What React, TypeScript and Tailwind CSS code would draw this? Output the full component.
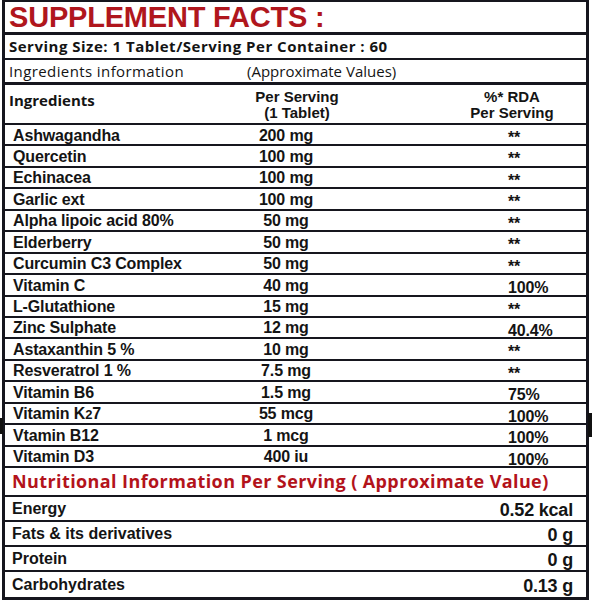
import React from 'react';

type Ingredient = {
  name: React.ReactNode;
  key: string;
  amount: string;
  rda: string;
};

const ingredients: Ingredient[] = [
  { key: 'ash', name: 'Ashwagandha', amount: '200 mg', rda: '**' },
  { key: 'que', name: 'Quercetin', amount: '100 mg', rda: '**' },
  { key: 'ech', name: 'Echinacea', amount: '100 mg', rda: '**' },
  { key: 'gar', name: 'Garlic ext', amount: '100 mg', rda: '**' },
  { key: 'ala', name: 'Alpha lipoic acid 80%', amount: '50 mg', rda: '**' },
  { key: 'eld', name: 'Elderberry', amount: '50 mg', rda: '**' },
  { key: 'cur', name: 'Curcumin C3 Complex', amount: '50 mg', rda: '**' },
  { key: 'vc', name: 'Vitamin C', amount: '40 mg', rda: '100%' },
  { key: 'glu', name: 'L-Glutathione', amount: '15 mg', rda: '**' },
  { key: 'zin', name: 'Zinc Sulphate', amount: '12 mg', rda: '40.4%' },
  { key: 'ast', name: 'Astaxanthin 5 %', amount: '10 mg', rda: '**' },
  { key: 'res', name: 'Resveratrol 1 %', amount: '7.5 mg', rda: '**' },
  { key: 'b6', name: 'Vitamin B6', amount: '1.5 mg', rda: '75%' },
  {
    key: 'k27',
    name: (
      <>
        Vitamin K<span className="text-[13px]">2</span>7
      </>
    ),
    amount: '55 mcg',
    rda: '100%',
  },
  { key: 'b12', name: 'Vtamin B12', amount: '1 mcg', rda: '100%' },
  { key: 'd3', name: 'Vitamin D3', amount: '400 iu', rda: '100%' },
];

const nutrition = [
  { label: 'Energy', value: '0.52 kcal' },
  { label: 'Fats & its derivatives', value: '0 g' },
  { label: 'Protein', value: '0 g' },
  { label: 'Carbohydrates', value: '0.13 g' },
];

const App: React.FC = () => {
  return (
    <div className="relative w-[592px] h-[600px] bg-white overflow-hidden">
      {/* scan marks on the edges */}
      <div className="absolute left-0 top-[418px] w-[3px] h-[16px] bg-[#111]" />
      <div className="absolute right-0 top-[413px] w-[4px] h-[24px] bg-[#111]" />

      <div className="ml-[2px] w-[587px] h-[600px] flex flex-col border-x-[3px] border-t-2 border-b-[3px] border-[#16161e] text-[#141414] font-['Liberation_Sans',Arial,sans-serif]">
        {/* Title */}
        <div className="h-[33px] shrink-0 flex items-center pl-1 border-b-[3px] border-[#16161e]">
          <h1 className="text-[29px] font-bold leading-none text-[#b0161d] tracking-[-0.2px]">
            SUPPLEMENT FACTS :
          </h1>
        </div>

        {/* Serving size */}
        <div className="h-[25px] shrink-0 flex items-center pl-1 border-b-2 border-[#16161e] font-['Open_Sans',sans-serif] font-bold text-[15px] tracking-[0.5px]">
          Serving Size: 1 Tablet/Serving Per Container : 60
        </div>

        {/* Ingredients information */}
        <div className="h-[25px] shrink-0 flex items-center pl-1 border-b-[3px] border-[#16161e] font-['Open_Sans',sans-serif] text-[15px]">
          <span className="w-[238px] tracking-[0.4px]">Ingredients information</span>
          <span>(Approximate Values)</span>
        </div>

        {/* Column headers */}
        <div className="h-[40px] shrink-0 grid grid-cols-[225px_112px_1fr] border-b-2 border-[#16161e] text-[15px] font-bold leading-[16px]">
          <div className="pl-1 pt-[7px] font-['Open_Sans',sans-serif]">Ingredients</div>
          <div className="pt-[4px] pl-[22px] text-center">
            Per Serving
            <br />
            (1 Tablet)
          </div>
          <div className="pt-[4px] pl-[96px] text-center">
            %* RDA
            <br />
            Per Serving
          </div>
        </div>

        {/* Ingredient rows */}
        {ingredients.map((item) => (
          <div
            key={item.key}
            className="h-[21.45px] shrink-0 grid grid-cols-[225px_112px_1fr] border-b-2 border-[#16161e] text-[16px] font-bold leading-none tracking-[-0.15px]"
          >
            <div className="pl-2 flex items-center">{item.name}</div>
            <div className="flex items-center justify-center">{item.amount}</div>
            <div className="pl-[166px] pt-[5px] flex items-center">{item.rda}</div>
          </div>
        ))}

        {/* Nutritional information header */}
        <div className="h-[29px] shrink-0 flex items-center pl-[7px] border-b-2 border-[#16161e] font-['Open_Sans',sans-serif] font-bold text-[18px] text-[#b3131b] tracking-[0.4px]">
          Nutritional Information Per Serving ( Approximate Value)
        </div>

        {/* Nutrition rows */}
        {nutrition.map((row, i) => (
          <div
            key={row.label}
            className={`h-[25px] shrink-0 flex items-center justify-between pl-[7px] pr-[13px] font-bold ${
              i < nutrition.length - 1 ? 'border-b-2 border-[#16161e]' : ''
            }`}
          >
            <span className="text-[16px]">{row.label}</span>
            <span className="text-[18px] pt-[3px] tracking-[-0.2px]">{row.value}</span>
          </div>
        ))}
      </div>
    </div>
  );
};

export default App;
